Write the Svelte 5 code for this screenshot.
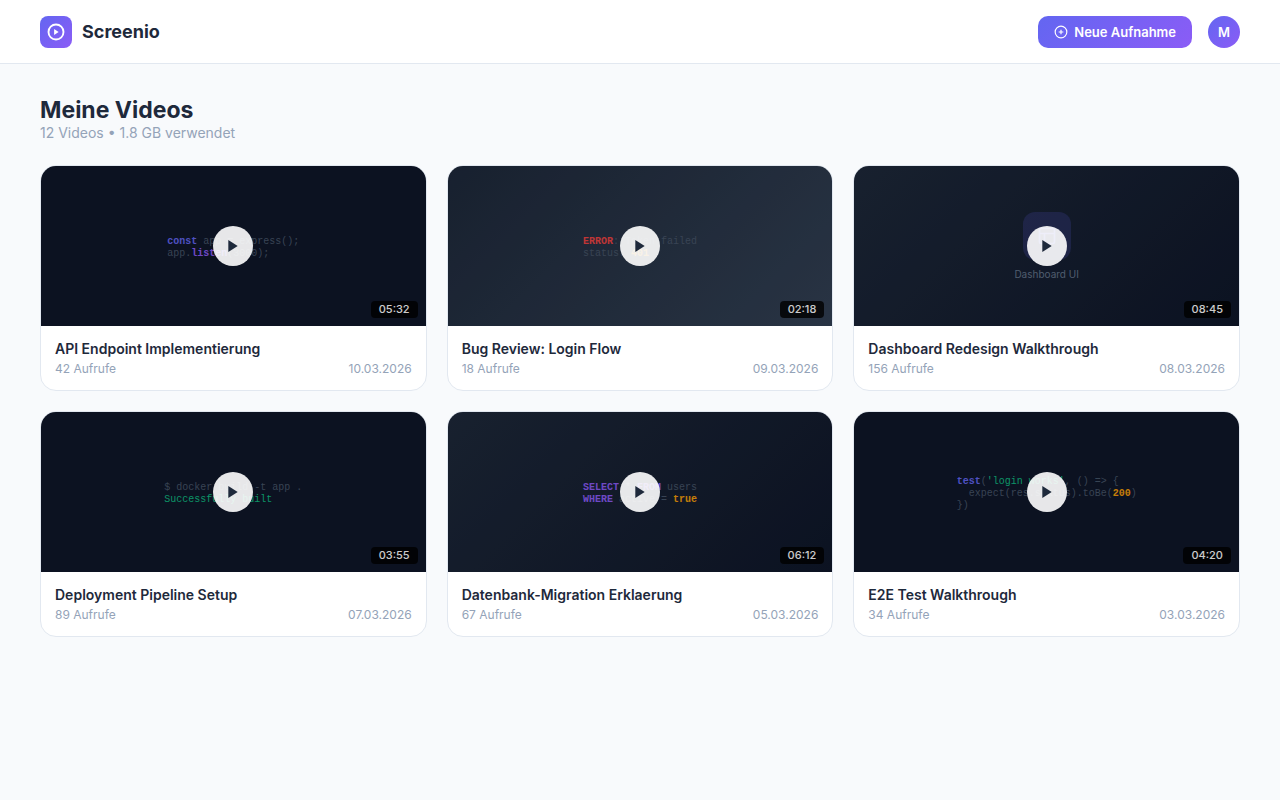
<script lang="ts">
    type Token = [string, string?];
    type Video = {
        title: string;
        views: number;
        date: string;
        duration: string;
        theme: string;
        code?: Token[][];
        label?: string;
    };

    const user = { initial: 'M' };

    const videos: Video[] = [
        {
            title: 'API Endpoint Implementierung', views: 42, date: '10.03.2026', duration: '05:32', theme: 'dark',
            code: [
                [['const', 'indigo'], [' app = express();']],
                [['app.'], ['listen', 'violet'], ['(3000);']]
            ]
        },
        {
            title: 'Bug Review: Login Flow', views: 18, date: '09.03.2026', duration: '02:18', theme: 'slate',
            code: [
                [['ERROR', 'red'], [': Token failed']],
                [['status: '], ['401', 'amber']]
            ]
        },
        {
            title: 'Dashboard Redesign Walkthrough', views: 156, date: '08.03.2026', duration: '08:45', theme: 'night',
            label: 'Dashboard UI'
        },
        {
            title: 'Deployment Pipeline Setup', views: 89, date: '07.03.2026', duration: '03:55', theme: 'dark',
            code: [
                [['$ docker build -t app .']],
                [['Successfully built', 'green']]
            ]
        },
        {
            title: 'Datenbank-Migration Erklaerung', views: 67, date: '05.03.2026', duration: '06:12', theme: 'night',
            code: [
                [['SELECT', 'violet'], [' * '], ['FROM', 'violet'], [' users']],
                [['WHERE', 'violet'], [' active = '], ['true', 'amber']]
            ]
        },
        {
            title: 'E2E Test Walkthrough', views: 34, date: '03.03.2026', duration: '04:20', theme: 'dark',
            code: [
                [['test', 'indigo'], ['('], ["'login works'", 'green'], [', () => {']],
                [['  expect(res.status).toBe('], ['200', 'amber'], [')']],
                [['})']]
            ]
        }
    ];
</script>

<header class="topbar">
    <a class="brand" href="/">
        <span class="logo">
            <svg width="18" height="18" viewBox="0 0 24 24" fill="none" stroke="currentColor" stroke-width="2.5">
                <circle cx="12" cy="12" r="10" />
                <path d="M9.5 8v8l6-4z" fill="currentColor" stroke="none" />
            </svg>
        </span>
        Screenio
    </a>
    <div class="actions">
        <button class="record" type="button">
            <svg width="14" height="14" viewBox="0 0 24 24" fill="none" stroke="currentColor" stroke-width="2">
                <circle cx="12" cy="12" r="10" />
                <path d="M12 8v8M8 12h8" />
            </svg>
            Neue Aufnahme
        </button>
        <button class="avatar" type="button" aria-label="Profil">{user.initial}</button>
    </div>
</header>

<main>
    <h1>Meine Videos</h1>
    <p class="usage">12 Videos • 1.8 GB verwendet</p>

    <div class="grid">
        {#each videos as video}
            <article class="card">
                <div class="thumb {video.theme}">
                    {#if video.code}
                        <pre class="code">{#each video.code as line}<div>{#each line as [text, color]}<span class={color}>{text}</span>{/each}</div>{/each}</pre>
                    {:else}
                        <div class="preview">
                            <span class="tile">
                                <svg width="20" height="20" viewBox="0 0 24 24" fill="none" stroke="currentColor" stroke-width="2">
                                    <rect x="3" y="3" width="18" height="18" rx="2" />
                                    <path d="M3 9h18M9 21V9" />
                                </svg>
                            </span>
                            {video.label}
                        </div>
                    {/if}
                    <span class="duration">{video.duration}</span>
                    <div class="overlay">
                        <button class="play" type="button" aria-label="{video.title} abspielen">
                            <svg width="16" height="16" viewBox="0 0 24 24" fill="currentColor">
                                <path d="M5 3v18l14-9z" />
                            </svg>
                        </button>
                    </div>
                </div>
                <div class="info">
                    <h2>{video.title}</h2>
                    <div class="meta">
                        <span>{video.views} Aufrufe</span>
                        <span>{video.date}</span>
                    </div>
                </div>
            </article>
        {/each}
    </div>
</main>

<style>
    :global(body) {
        background: #f8fafc;
        color: #1e293b;
        font-family: Inter, "Liberation Sans", sans-serif;
    }
    button {
        border: none;
        padding: 0;
        font-family: inherit;
        color: #fff;
        cursor: pointer;
    }
    .topbar {
        display: flex;
        align-items: center;
        justify-content: space-between;
        padding: 16px 40px 15px;
        background: #fff;
        border-bottom: 1px solid #e2e8f0;
    }
    .brand {
        display: flex;
        align-items: center;
        gap: 10px;
        font-size: 18px;
        font-weight: 700;
        line-height: 20px;
        color: inherit;
        text-decoration: none;
    }
    .logo {
        display: flex;
        align-items: center;
        justify-content: center;
        width: 32px;
        height: 32px;
        border-radius: 8px;
        color: #fff;
        background: linear-gradient(135deg, #6366f1, #8b5cf6);
    }
    .actions {
        display: flex;
        align-items: center;
        gap: 16px;
    }
    .record {
        display: flex;
        align-items: center;
        gap: 6px;
        height: 32px;
        padding: 0 16px;
        border-radius: 10px;
        font-size: 13px;
        font-weight: 600;
        background: linear-gradient(135deg, #6366f1, #8b5cf6);
    }
    .avatar {
        width: 32px;
        height: 32px;
        border-radius: 50%;
        font-size: 13px;
        font-weight: 600;
        background: linear-gradient(135deg, #6366f1, #8b5cf6);
    }
    main {
        padding: 32px 40px;
    }
    h1 {
        margin: 0;
        font-size: 23px;
        line-height: 29px;
        font-weight: 700;
    }
    .usage {
        margin: 0 0 24px;
        font-size: 14px;
        line-height: 16px;
        color: #94a3b8;
    }
    .grid {
        display: grid;
        grid-template-columns: repeat(3, 1fr);
        gap: 20px;
    }
    .card {
        overflow: hidden;
        background: #fff;
        border: 1px solid #e2e8f0;
        border-radius: 16px;
    }
    .thumb {
        position: relative;
        display: flex;
        align-items: center;
        justify-content: center;
        height: 160px;
    }
    .dark {
        background: #0f172a;
    }
    .slate {
        background: linear-gradient(135deg, #1e293b, #334155);
    }
    .night {
        background: linear-gradient(135deg, #1e293b, #0f172a);
    }
    .code {
        margin: 0;
        padding-top: 4px;
        font-family: "Courier New", "Liberation Mono", monospace;
        font-size: 10px;
        line-height: 12px;
        color: #475569;
    }
    .indigo { color: #6366f1; font-weight: 700; }
    .violet { color: #8b5cf6; font-weight: 700; }
    .red { color: #ef4444; font-weight: 700; }
    .green { color: #10b981; }
    .amber { color: #f59e0b; font-weight: 700; }
    .preview {
        display: flex;
        flex-direction: column;
        align-items: center;
        gap: 8px;
        font-size: 10px;
        line-height: 12px;
        color: #64748b;
    }
    .tile {
        display: flex;
        align-items: center;
        justify-content: center;
        width: 48px;
        height: 48px;
        border-radius: 12px;
        color: #6366f1;
        background: rgba(99, 102, 241, 0.2);
    }
    .duration {
        position: absolute;
        right: 8px;
        bottom: 8px;
        padding: 2px 8px;
        border-radius: 4px;
        font-size: 11px;
        line-height: 13px;
        font-weight: 500;
        color: #fff;
        background: rgba(0, 0, 0, 0.8);
    }
    .overlay {
        position: absolute;
        inset: 0;
        display: flex;
        align-items: center;
        justify-content: center;
        background: rgba(0, 0, 0, 0.2);
    }
    .play {
        display: flex;
        align-items: center;
        justify-content: center;
        width: 40px;
        height: 40px;
        border-radius: 50%;
        color: #1e293b;
        background: rgba(255, 255, 255, 0.9);
    }
    .info {
        padding: 14px;
    }
    h2 {
        margin: 0 0 4px;
        font-size: 14px;
        line-height: 17px;
        font-weight: 600;
    }
    .meta {
        display: flex;
        justify-content: space-between;
        font-size: 12px;
        line-height: 15px;
        color: #94a3b8;
    }
</style>
